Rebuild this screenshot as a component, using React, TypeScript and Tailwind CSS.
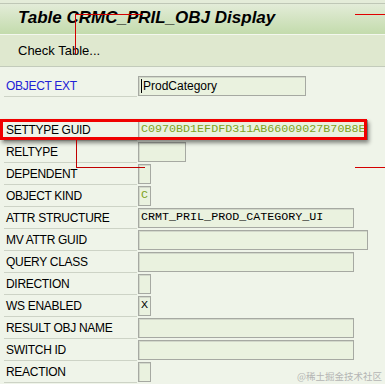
type Row = {
  label: string;
  kind: "text" | "check" | "none";
  width?: number;
  value?: string;
  blue?: boolean;
  green?: boolean;
};

const rows: Row[] = [
  { label: "OBJECT EXT", kind: "text", width: 168, value: "ProdCategory", blue: true },
  { label: "", kind: "none" },
  { label: "SETTYPE GUID", kind: "text", width: 230, value: "C0970BD1EFDFD311AB66009027B70B8E", green: true },
  { label: "RELTYPE", kind: "text", width: 48 },
  { label: "DEPENDENT", kind: "check" },
  { label: "OBJECT KIND", kind: "check", value: "C", green: true },
  { label: "ATTR STRUCTURE", kind: "text", width: 216, value: "CRMT_PRIL_PROD_CATEGORY_UI" },
  { label: "MV ATTR GUID", kind: "text", width: 230 },
  { label: "QUERY CLASS", kind: "text", width: 216 },
  { label: "DIRECTION", kind: "check" },
  { label: "WS ENABLED", kind: "check", value: "X" },
  { label: "RESULT OBJ NAME", kind: "text", width: 216 },
  { label: "SWITCH ID", kind: "text", width: 216 },
  { label: "REACTION", kind: "check" },
];

const mono = "font-['Liberation_Mono','DejaVu_Sans_Mono',monospace] text-[11.7px]";
const field = "h-[20px] border border-[#a6a9a2] bg-[#eaf2df] shadow-[inset_1px_1px_0_#d2d8ca]";

function Field({ row }: { row: Row }) {
  if (row.kind === "none") return null;
  if (row.kind === "check") {
    return (
      <div className={`${field} w-[13px] flex items-center justify-center ${mono} ${row.green ? "text-[#7ea21c]" : "text-black"}`}>
        {row.value}
      </div>
    );
  }
  const isProp = row.label === "OBJECT EXT";
  return (
    <div
      className={`${field} flex items-center pl-[2px] overflow-hidden whitespace-nowrap ${
        isProp ? "font-['Liberation_Sans',Arial,sans-serif] text-[12px]" : mono
      } ${row.green ? "text-[#7ea21c]" : "text-black"}`}
      style={{ width: row.width }}
    >
      {isProp && <span className="mr-px h-[14px] w-px bg-black" />}
      {row.value}
    </div>
  );
}

export default function App() {
  return (
    <div className="relative h-[384px] w-[385px] overflow-hidden bg-[#eff4e9] font-['Liberation_Sans',Arial,sans-serif]">
      <div className="h-[3px] bg-[#e4ecd9]" />
      <div className="flex h-[31px] items-center border-t border-[#bfc7b6] bg-gradient-to-b from-[#e3ecd8] to-[#c3dbac] pb-[3px] pl-[18px]">
        <span className="text-[17px] font-bold italic text-black">Table CRMC_PRIL_OBJ Display</span>
      </div>
      <div className="flex h-[33px] items-center border-t border-[#f3f7ee] border-b border-b-[#c3cbbb] bg-[#dfe8cf] pl-[18px] text-[13px] text-black">
        Check Table...
      </div>
      <div className="pt-[8px]">
        {rows.map((row, i) => (
          <div key={i} className="flex h-[22px] items-center">
            <div
              className={`ml-[4px] flex h-[22px] w-[133px] items-center pl-[2px] text-[12px] tracking-[-0.3px] ${
                row.label ? "border-b border-[#cdd3c6]" : ""
              } ${row.blue ? "text-[#2121d6]" : "text-black"}`}
            >
              {row.label}
            </div>
            <div className="ml-px">
              <Field row={row} />
            </div>
          </div>
        ))}
      </div>

      {/* highlight box */}
      <div className="absolute left-0 top-[119px] h-[21px] w-[367px] border-[3px] border-[#f00000] shadow-[2px_3px_4px_rgba(0,0,0,0.45)]" />

      {/* annotation lines */}
      <div className="absolute left-[75px] top-[14px] h-px w-[68px] bg-[#d40000]" />
      <div className="absolute left-[75px] top-[14px] h-[40px] w-px bg-[#d40000]" />
      <div className="absolute left-[355px] top-[14px] h-px w-[30px] bg-[#e00000]" />
      <div className="absolute left-[76px] top-[140px] h-[28px] w-px bg-[#c00000]" />
      <div className="absolute left-[76px] top-[167px] h-px w-[69px] bg-[#c00000]" />
      <div className="absolute left-[355px] top-[167px] h-px w-[30px] bg-[#d40000]" />

      <div className="absolute right-[3px] top-[369px] font-['Noto_Sans_CJK_SC',sans-serif] text-[9.5px] text-[#b4b4b4]">
        @稀土掘金技术社区
      </div>
    </div>
  );
}
